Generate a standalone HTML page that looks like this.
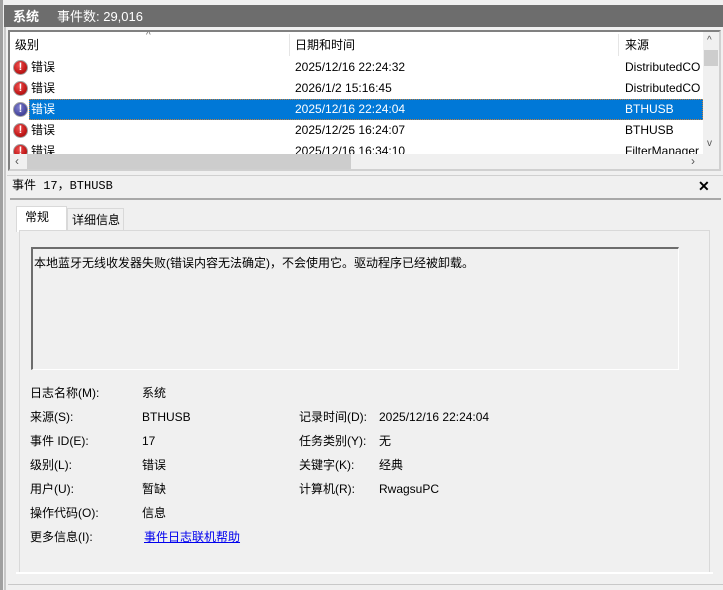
<!DOCTYPE html>
<html><head><meta charset="utf-8"><style>
*{box-sizing:border-box;margin:0;padding:0}
body{width:723px;height:590px;overflow:hidden;background:#f0f0f0;font-family:"Liberation Sans","Noto Sans CJK SC",sans-serif;font-size:12px;line-height:15px;color:#000;position:relative}
.a{position:absolute;white-space:nowrap;line-height:15px}
.ic{position:absolute;width:15px;height:15px;border-radius:50%;background:radial-gradient(circle at 40% 35%,#f05050,#c01818 60%,#901010);border:1px solid #a0a0a0;color:#fff;font:bold 11px/13px "Liberation Sans",sans-serif;text-align:center}
.sel .ic{background:radial-gradient(circle at 40% 35%,#8080d0,#4a4aa0 60%,#303080)}
.row{position:absolute;left:11px;width:692px;height:21px}
.row span{position:absolute;top:3px;line-height:15px;white-space:nowrap}
</style></head><body>
<div class="a" style="left:0;top:0;width:723px;height:5px;background:#f0f0f0"></div>
<div class="a" style="left:4px;top:5px;width:719px;height:22px;background:#6d6d6d;color:#fff;font-size:13px"><span class="a" style="left:9px;top:4px;font-weight:bold">系统</span><span class="a" style="left:53px;top:4px">事件数: 29,016</span></div>
<div class="a" style="left:0;top:0;width:3px;height:590px;background:#a0a0a0"></div>
<div class="a" style="left:4px;top:27px;width:2px;height:563px;background:#c8c8c8"></div>
<!-- list -->
<div class="a" style="left:8px;top:30px;width:713px;height:141px;border:2px solid #808080;border-right-color:#d0d0d0;border-bottom-color:#d0d0d0;background:#fff;overflow:hidden">
 <div class="a" style="left:0;top:0;width:693px;height:25px;background:#fff">
  <span class="a" style="left:5px;top:6px">级别</span>
  <span class="a" style="left:285px;top:6px">日期和时间</span>
  <span class="a" style="left:615px;top:6px">来源</span>
  <div class="a" style="left:279px;top:2px;width:1px;height:22px;background:#e5e5e5"></div>
  <div class="a" style="left:608px;top:2px;width:1px;height:22px;background:#e5e5e5"></div>
  <span class="a" style="left:136px;top:-4px;font-size:10px;color:#666">^</span>
 </div>
 <div class="row" style="left:0;top:25px"><div class="ic" style="left:3px;top:3px">!</div><span style="left:21px">错误</span><span style="left:285px">2025/12/16 22:24:32</span><span style="left:615px">DistributedCO</span></div>
 <div class="row" style="left:0;top:46px"><div class="ic" style="left:3px;top:3px">!</div><span style="left:21px">错误</span><span style="left:285px">2026/1/2 15:16:45</span><span style="left:615px">DistributedCO</span></div>
 <div class="row sel" style="left:0;top:67px"><div class="ic" style="left:3px;top:3px">!</div><div class="a" style="left:19px;top:0;width:674px;height:21px;background:#0078d7;outline:1px dotted #c08040;outline-offset:-1px"></div><span style="left:21px;color:#fff">错误</span><span style="left:285px;color:#fff">2025/12/16 22:24:04</span><span style="left:615px;color:#fff">BTHUSB</span></div>
 <div class="row" style="left:0;top:88px"><div class="ic" style="left:3px;top:3px">!</div><span style="left:21px">错误</span><span style="left:285px">2025/12/25 16:24:07</span><span style="left:615px">BTHUSB</span></div>
 <div class="row" style="left:0;top:109px"><div class="ic" style="left:3px;top:3px">!</div><span style="left:21px">错误</span><span style="left:285px">2025/12/16 16:34:10</span><span style="left:615px">FilterManager</span></div>
 <div class="a" style="left:0;top:122px;width:693px;height:16px;background:#f0f0f0"><div class="a" style="left:17px;top:0;width:324px;height:16px;background:#cdcdcd"></div><span class="a" style="left:5px;top:0;font-size:12px;color:#555">‹</span><span class="a" style="left:681px;top:0;font-size:12px;color:#555">›</span></div>
 <div class="a" style="left:693px;top:0;width:16px;height:138px;background:#f0f0f0"><div class="a" style="left:1px;top:18px;width:14px;height:16px;background:#cdcdcd"></div><span class="a" style="left:4px;top:1px;font-size:10px;color:#555">^</span><span class="a" style="left:4px;top:104px;font-size:10px;color:#555">v</span></div>
 <div class="a" style="left:0;top:138px;width:709px;height:3px;background:#f0f0f0"></div>
</div>
<!-- details -->
<div class="a" style="left:7px;top:175px;width:716px;height:1px;background:#d0d0d0"></div>
<div class="a" style="left:8px;top:176px;width:713px;height:22px;background:#f0f0f0"><span class="a" style="left:4px;top:3px;font-family:'Liberation Mono','Noto Sans CJK SC',monospace;font-size:12px">事件 17，BTHUSB</span><span class="a" style="left:690px;top:3px;font-weight:bold;font-size:14px">✕</span></div>
<div class="a" style="left:10px;top:198px;width:711px;height:2px;background:#a8a8a8"></div>
<div class="a" style="left:16px;top:206px;width:51px;height:26px;background:#fff;border:1px solid #d9d9d9;border-bottom:none"><span class="a" style="left:8px;top:3px">常规</span></div>
<div class="a" style="left:67px;top:208px;width:57px;height:22px;background:#f0f0f0;border:1px solid #d9d9d9;border-bottom:none"><span class="a" style="left:4px;top:4px">详细信息</span></div>
<div class="a" style="left:19px;top:230px;width:691px;height:343px;border:1px solid #d9d9d9;background:#f0f0f0"></div>
<div class="a" style="left:16px;top:572px;width:697px;height:2px;background:#fff"></div>
<div class="a" style="left:31px;top:247px;width:648px;height:123px;border:2px solid #a0a0a0;border-top-color:#6d6d6d;border-left-color:#6d6d6d;border-right:1px solid #fff;border-bottom:1px solid #fff;background:#f0f0f0"><span class="a" style="left:1px;top:7px">本地蓝牙无线收发器失败(错误内容无法确定)，不会使用它。驱动程序已经被卸载。</span></div>
<span class="a" style="left:30px;top:386px">日志名称(M):</span><span class="a" style="left:142px;top:386px">系统</span>
<span class="a" style="left:30px;top:410px">来源(S):</span><span class="a" style="left:142px;top:410px">BTHUSB</span><span class="a" style="left:299px;top:410px">记录时间(D):</span><span class="a" style="left:379px;top:410px">2025/12/16 22:24:04</span>
<span class="a" style="left:30px;top:434px">事件 ID(E):</span><span class="a" style="left:142px;top:434px">17</span><span class="a" style="left:299px;top:434px">任务类别(Y):</span><span class="a" style="left:379px;top:434px">无</span>
<span class="a" style="left:30px;top:458px">级别(L):</span><span class="a" style="left:142px;top:458px">错误</span><span class="a" style="left:299px;top:458px">关键字(K):</span><span class="a" style="left:379px;top:458px">经典</span>
<span class="a" style="left:30px;top:482px">用户(U):</span><span class="a" style="left:142px;top:482px">暂缺</span><span class="a" style="left:299px;top:482px">计算机(R):</span><span class="a" style="left:379px;top:482px">RwagsuPC</span>
<span class="a" style="left:30px;top:506px">操作代码(O):</span><span class="a" style="left:142px;top:506px">信息</span>
<span class="a" style="left:30px;top:530px">更多信息(I):</span><span class="a" style="left:144px;top:530px;color:#0000ee;text-decoration:underline">事件日志联机帮助</span>
<div class="a" style="left:8px;top:584px;width:715px;height:1px;background:#c8c8c8"></div>
</body></html>
